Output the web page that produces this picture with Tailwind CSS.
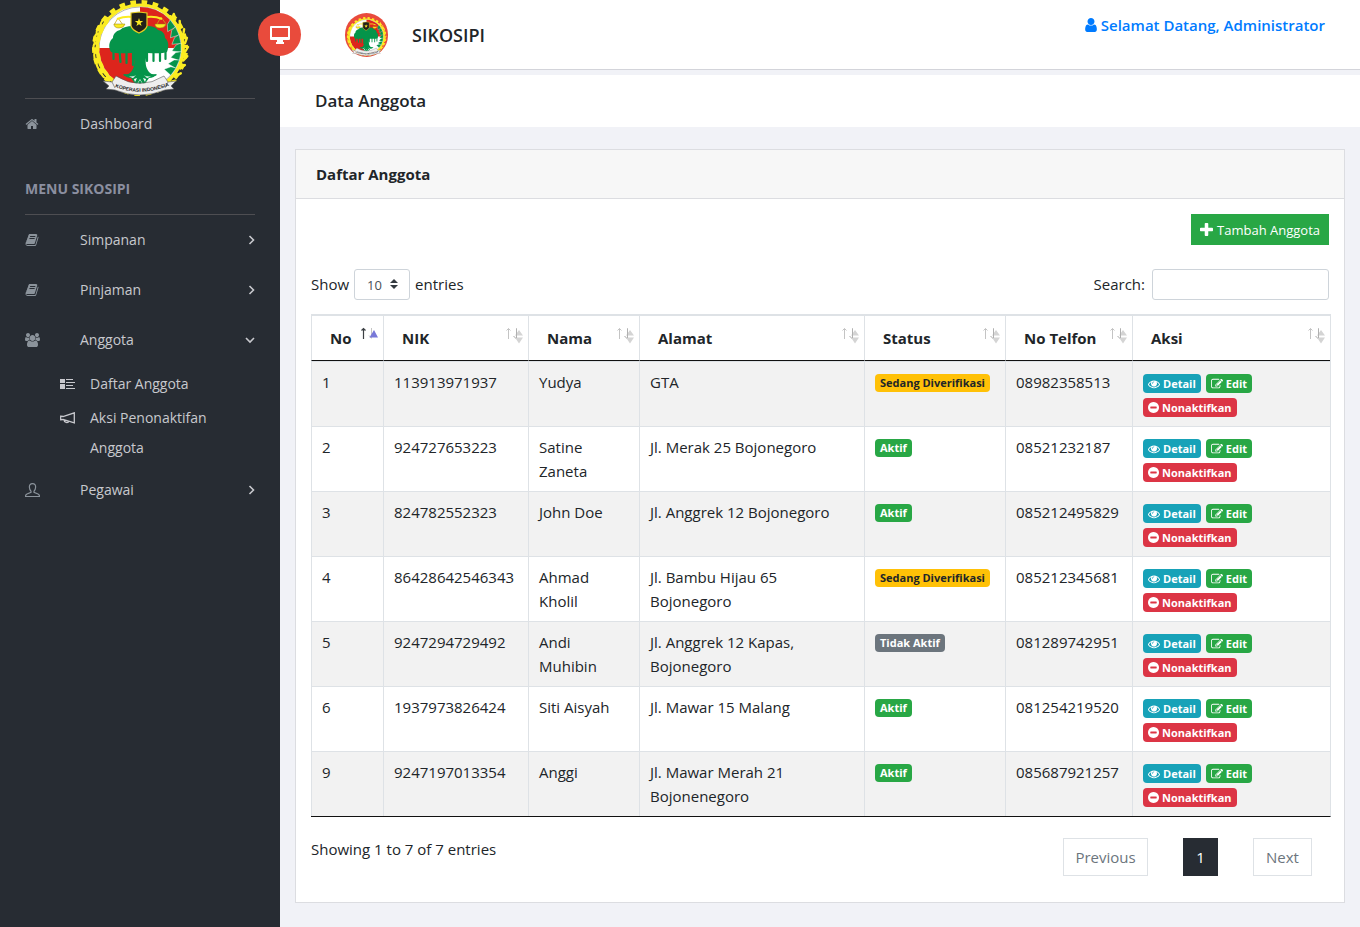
<!DOCTYPE html>
<html lang="id">
<head>
<meta charset="utf-8">
<meta name="viewport" content="width=device-width, initial-scale=1">
<title>SIKOSIPI - Data Anggota</title>
<script src="https://cdn.jsdelivr.net/npm/@tailwindcss/browser@4"></script>
</head>
<body class="flex min-h-screen bg-[#f1f2f7] font-['Open_Sans',sans-serif] text-[15px] leading-6 text-[#212529]">

<!-- Shared symbols -->
<svg class="hidden" aria-hidden="true">
  <symbol id="i-eye" viewBox="0 0 1792 1792"><path d="M1664 960q-152-236-381-353 61 104 61 225 0 185-131.5 316.5t-316.5 131.5-316.5-131.5-131.5-316.5q0-121 61-225-229 117-381 353 133 205 333.5 326.5t434.5 121.5 434.5-121.5 333.5-326.5zm-720-384q0-20-14-34t-34-14q-125 0-214.5 89.5t-89.5 214.5q0 20 14 34t34 14 34-14 14-34q0-86 61-147t147-61q20 0 34-14t14-34zm848 384q0 34-20 69-140 230-376.5 368.5t-499.5 138.5-499.5-139-376.5-368q-20-35-20-69t20-69q140-229 376.5-368t499.5-139 499.5 139 376.5 368q20 35 20 69z"/></symbol>
  <symbol id="i-edit" viewBox="0 0 1792 1792"><path d="M888 1184l116-116-152-152-116 116v56h96v96h56zm440-720q-16-16-33 1l-350 350q-17 17-1 33t33-1l350-350q17-17 1-33zm80 594v190q0 119-84.5 203.5t-203.5 84.5h-832q-119 0-203.5-84.5t-84.5-203.5v-832q0-119 84.5-203.5t203.5-84.5h832q63 0 117 25 15 7 18 23 3 17-9 29l-49 49q-14 14-32 8-23-6-45-6h-832q-66 0-113 47t-47 113v832q0 66 47 113t113 47h832q66 0 113-47t47-113v-126q0-13 9-22l64-64q15-15 35-7t20 29zm-96-738l288 288-672 672h-288v-288zm444 132l-92 92-288-288 92-92q28-28 68-28t68 28l152 152q28 28 28 68t-28 68z"/></symbol>
  <symbol id="i-minus" viewBox="128 128 1536 1536"><path d="M1344 960v-128q0-26-19-45t-45-19h-768q-26 0-45 19t-19 45v128q0 26 19 45t45 19h768q26 0 45-19t19-45zm320-64q0 209-103 385.5t-279.5 279.5-385.5 103-385.5-103-279.5-279.5-103-385.5 103-385.5 279.5-279.5 385.5-103 385.5 103 279.5 279.5 103 385.5z"/></symbol>
  <symbol id="i-book" viewBox="0 0 1792 1792"><path d="M1703 478q40 57 18 129l-275 906q-19 64-76.5 107.5t-122.5 43.5h-923q-77 0-148.5-53.5t-99.5-131.5q-24-67-2-127 0-4 3-27t4-37q1-8-3-21.5t-3-19.5q2-11 8-21t16.5-23.5 16.5-23.5q23-38 45-91.5t30-91.5q3-10 .5-30t-.5-28q3-11 17-28t17-23q21-36 42-92t25-90q1-9-2.5-32t.5-28q4-13 22-30.5t22-22.5q19-26 42.5-84.5t27.5-96.5q1-8-3-25.5t-2-26.5q2-8 9-18t18-23 17-21q8-12 16.5-30.5t15-35 16-36 19.5-32 26.5-23.5 36-11.5 47.5 5.5l-1 3q38-9 51-9h761q74 0 114 56t18 130l-274 906q-36 119-71.5 153.5t-128.5 34.5h-869q-27 0-38 15-11 16-1 43 24 70 144 70h923q29 0 56-15.5t35-41.5l300-987q7-22 5-57 38 15 59 43zm-1064 2q-4 13 2 22.5t20 9.5h608q13 0 25.5-9.5t16.5-22.5l21-64q4-13-2-22.5t-20-9.5h-608q-13 0-25.5 9.5t-16.5 22.5zm-83 256q-4 13 2 22.5t20 9.5h608q13 0 25.5-9.5t16.5-22.5l21-64q4-13-2-22.5t-20-9.5h-608q-13 0-25.5 9.5t-16.5 22.5z"/></symbol>
  <symbol id="i-right" viewBox="0 0 8 10"><path d="M2.500 1l4 4-4 4" fill="none" stroke="currentColor" stroke-width="1.6"/></symbol>
  <symbol id="i-sort" viewBox="0 0 18 20">
    <path d="M3.5 13V2.500M1.500 4.500l2-2 2 2M11.500 2v11" fill="none" stroke="#c4c4c4" stroke-width="1"/>
    <path d="M8.500 10l3 3 1-1" fill="none" stroke="#a9a9a9"/>
    <path d="M10 9.500l4-5.500 4 5.500zM10 11.500h8l-4 6z" fill="#d4d4d4"/>
    <path d="M11.500 3v9" stroke="#b0b0b0"/>
  </symbol>
  <symbol id="i-sort-asc" viewBox="0 0 18 20">
    <path d="M3.500 13V2.500M1.500 4.500l2-2 2 2" fill="none" stroke="#3c4044" stroke-width="1.200"/>
    <path d="M11.500 2v10M9 9.500l2.500 3" fill="none" stroke="#c4c4c4"/>
    <path d="M9.500 11.500l4.500-7.500 4 7.500z" fill="#7878d8"/>
  </symbol>
  <symbol id="logo" viewBox="0 0 100 98">
    <!-- gear -->
    <circle cx="50" cy="48" r="44.500" fill="none" stroke="#fbec22" stroke-width="7" pathLength="360" stroke-dasharray="7 7" stroke-dashoffset="134" clip-path="url(#gearclip)"/>
    <circle cx="50" cy="48" r="43" fill="#fff" stroke="#fbec22" stroke-width="3" clip-path="url(#gearclip)"/>
    <!-- quartered field -->
    <circle cx="50" cy="48" r="41" fill="#fff" stroke="#6b6b6b" stroke-width=".5"/>
    <path d="M50 48V7a41 41 0 0 1 41 41zM50 48H9a41 41 0 0 0 41 41z" fill="#dd251c"/>
    <!-- banyan tree -->
    <path d="M21 52c-3-5-2-11 2-14 0-4 3-7 7-8 3-3 8-4 12-4h16c4 0 8 1 10 4 5 1 7 4 7 8 4 3 4 9 2 14-5 2-13 1-20 1-2 8-2 14 2 19 3 3 6 3 8 3-4 2-8 2-17 1-9 1-13 1-17-1 2 0 5 0 8-3 4-5 4-11 2-19-7 0-17 1-22-1z" fill="#05944a"/>
    <path d="M23.500 50v9M29.500 50l1 12M36.500 50v13M43 50v15M57 50v11M63.500 50v11M70 50v11M75.500 50v9" stroke="#05944a" stroke-width="2.200" stroke-linecap="round"/>
    <path d="M33 74q9 1 17-1 8 2 17 1-3 4-8 4l-5 7h-8l-5-7q-5 0-8-4z" fill="#05944a"/>
    <path d="M35 75q7 3 11 0l-3 3zM65 75q-7 3-11 0l3 3zM45 82l-1-3 3-1zM55 82l1-3-3-1zM47 84l3-5 3 5-3 1z" fill="#fff"/>
    <path d="M50 80l2 3-2 1-2-1z" fill="#05944a"/>
    <!-- scales and shield -->
    <path d="M28 18l-4 7M28 18l5 7M71 17l-4 7M71 17l5 7" stroke="#c9a91a" fill="none" stroke-width=".8"/>
    <path d="M27 19q8-3 15-2M57 17q8-1 15 2" stroke="#fbec22" stroke-width="2" fill="none"/>
    <path d="M24 24h11q-1 4-6 4t-5-4zM65 24h11q-1 4-6 4t-5-4z" fill="#fbec22" stroke="#8f7c10" stroke-width=".5"/>
    <path d="M41 13l8-1 8 1v13q-1 4-8 7-7-3-8-7z" fill="#22201a" stroke="#e6cd20" stroke-width="1.200"/>
    <path d="M49 18l1 3h3.200l-2.600 2 1 3-2.600-1.800-2.600 1.800 1-3-2.600-2h3.200z" fill="#fbec22"/>
    <!-- chain -->
    <g fill="none" stroke="#fbec22" stroke-width="2.200">
      <ellipse id="link" cx="6" cy="48" rx="2.500" ry="5"/>
      <use href="#link" transform="rotate(12 50 48)"/><use href="#link" transform="rotate(24 50 48)"/><use href="#link" transform="rotate(36 50 48)"/><use href="#link" transform="rotate(-12 50 48)"/><use href="#link" transform="rotate(-24 50 48)"/><use href="#link" transform="rotate(-36 50 48)"/><use href="#link" transform="rotate(-48 50 48)"/>
    </g>
    <!-- cotton leaves -->
    <g fill="#05944a" stroke="#fff" stroke-width=".4">
      <path id="cot" d="M91 52l-9-1 4-6 5-2z"/>
      <use href="#cot" transform="rotate(-36 50 48)"/><use href="#cot" transform="rotate(-24 50 48)"/><use href="#cot" transform="rotate(-12 50 48)"/><use href="#cot" transform="rotate(12 50 48)"/><use href="#cot" transform="rotate(24 50 48)"/><use href="#cot" transform="rotate(36 50 48)"/>
    </g>
    <!-- rice stalk -->
    <path d="M80 15a45 45 0 0 1-4 69" fill="none" stroke="#fbec22" stroke-width="1"/>
    <g fill="none" stroke="#fbec22" stroke-width="2.400" stroke-linecap="round">
      <path id="leaf" d="M93.500 51l-1-5M95 52l3-5"/>
      <use href="#leaf" transform="rotate(-44 50 48)"/><use href="#leaf" transform="rotate(-33 50 48)"/><use href="#leaf" transform="rotate(-22 50 48)"/><use href="#leaf" transform="rotate(-11 50 48)"/><use href="#leaf" transform="rotate(11 50 48)"/><use href="#leaf" transform="rotate(22 50 48)"/><use href="#leaf" transform="rotate(33 50 48)"/><use href="#leaf" transform="rotate(44 50 48)"/>
    </g>
    <!-- ribbon -->
    <path d="M13 81l9 1 4-6q24 15 48 0l4 6 8-1-5 5 3 3-9 1q-25 10-50 0l-9-1 3-3z" fill="#eee" stroke="#555" stroke-width=".6"/>
    <path d="M22 82l3 6M78 82l-3 6" stroke="#777" stroke-width=".8"/>
    <path id="ribbonline" d="M25 87q25 10 53-1" fill="none"/>
    <text font-family="Liberation Sans" font-size="5" font-weight="700" fill="#222"><textPath href="#ribbonline">KOPERASI INDONESIA</textPath></text>
  </symbol>
  <clipPath id="gearclip"><path d="M16 0h66v17L50 48 16 20z"/></clipPath>
</svg>

<aside class="w-[280px] shrink-0 bg-[#272c33] px-[25px] font-['Open_Sans',sans-serif] text-[14px] leading-[30px] text-[#c8c9ce]">
  <div class="flex h-[99px] justify-center border-b border-[#4e4e52]">
    <a href="#" aria-label="Koperasi Indonesia"><svg class="h-[98px] w-[100px]"><use href="#logo"/></svg></a>
  </div>
  <nav>
    <a href="#" class="flex h-[50px] items-center"><span class="w-[55px] text-[#8b939b]"><svg class="size-[14px] fill-current" viewBox="0 0 1792 1792"><path d="M1472 992v480q0 26-19 45t-45 19h-384v-384h-256v384h-384q-26 0-45-19t-19-45v-480q0-1 .5-3t.5-3l575-474 575 474q1 2 1 6zm223-69l-62 74q-8 9-21 11h-3q-13 0-21-7l-692-577-692 577q-12 8-24 7-13-2-21-11l-62-74q-8-10-7-23.500t11-21.500l719-599q32-26 76-26t76 26l244 204v-195q0-14 9-23t23-9h192q14 0 23 9t9 23v408l219 182q10 8 11 21.500t-7 23.500z"/></svg></span>Dashboard</a>
    <h3 class="mt-[15px] flex h-[51px] items-center border-b border-[#4e4e52] text-[14px] font-bold text-[#8b8fa0]">MENU SIKOSIPI</h3>
    <a href="#" class="flex h-[50px] items-center"><span class="w-[55px] text-[#8b939b]"><svg class="size-[14px] fill-current"><use href="#i-book"/></svg></span><span class="flex-1">Simpanan</span><svg class="h-[10px] w-2"><use href="#i-right"/></svg></a>
    <a href="#" class="flex h-[50px] items-center"><span class="w-[55px] text-[#8b939b]"><svg class="size-[14px] fill-current"><use href="#i-book"/></svg></span><span class="flex-1">Pinjaman</span><svg class="h-[10px] w-2"><use href="#i-right"/></svg></a>
    <a href="#" class="flex h-[50px] items-center"><span class="w-[55px] text-[#8b939b]"><svg class="h-[14px] w-[15px] fill-current" viewBox="0 0 1920 1792"><path d="M593 896q-162 5-265 128h-134q-82 0-138-40.500t-56-118.500q0-353 124-353 6 0 43.500 21t97.500 42.500 119 21.500q67 0 133-23-5 37-5 66 0 139 81 256zm1071 637q0 120-73 189.500t-194 69.500h-874q-121 0-194-69.500t-73-189.500q0-53 3.500-103.500t14-109 26.500-108.500 43-97.500 62-81 85.500-53.500 111.500-20q10 0 43 21.500t73 48 107 48 135 21.500 135-21.500 107-48 73-48 43-21.500q61 0 111.500 20t85.500 53.500 62 81 43 97.500 26.500 108.500 14 109 3.500 103.500zm-1024-1277q0 106-75 181t-181 75-181-75-75-181 75-181 181-75 181 75 75 181zm704 384q0 159-112.500 271.500t-271.500 112.500-271.500-112.500-112.500-271.500 112.500-271.500 271.500-112.500 271.500 112.500 112.500 271.500zm576 225q0 78-56 118.500t-138 40.500h-134q-103-123-265-128 81-117 81-256 0-29-5-66 66 23 133 23 59 0 119-21.500t97.500-42.500 43.500-21q124 0 124 353zm-128-609q0 106-75 181t-181 75-181-75-75-181 75-181 181-75 181 75 75 181z"/></svg></span><span class="flex-1">Anggota</span><svg class="h-2 w-[10px]" viewBox="0 0 10 8"><path d="M1 2l4 4 4-4" fill="none" stroke="currentColor" stroke-width="1.600"/></svg></a>
    <div class="flex flex-col gap-1 pb-[2px] pl-[35px] pt-[4px]">
      <a href="#" class="flex"><span class="flex h-[30px] w-[30px] items-center"><svg class="h-3 w-[15px]" viewBox="0 0 15 12"><path d="M0 1h5v4H0zM0 6h5v5H0z" fill="currentColor"/><path d="M6 1.500h7M6 4.500h9M6 7.500h7M6 10.500h9" stroke="currentColor"/></svg></span>Daftar Anggota</a>
      <a href="#" class="flex"><span class="flex h-[30px] w-[30px] items-center"><svg class="h-3 w-[15px]" viewBox="0 0 15 12" fill="none" stroke="currentColor" stroke-width="1.300"><path d="M.7 4.200L3 4.500 14.300.8v10L3 7.500l-2.300.3zM4 7.800c0 3 4 3.500 5 1.400"/></svg></span><span class="flex-1">Aksi Penonaktifan Anggota</span></a>
    </div>
    <a href="#" class="flex h-[50px] items-center"><span class="w-[55px] text-[#8b939b]"><svg class="h-[14px] w-[15px]" viewBox="0 0 15 14" fill="none" stroke="currentColor" stroke-width="1.200"><path d="M7.500.6c2.200 0 3.300 1.500 3.100 3.700-.1 1.900-1 3.400-1.600 3.900v1.200l4 1.600c1 .4 1.500 1.400 1.500 2.500H.5c0-1.100.5-2.100 1.500-2.500l4-1.600V8.200c-.6-.5-1.500-2-1.600-3.900C4.200 2.100 5.300.6 7.500.6z"/></svg></span><span class="flex-1">Pegawai</span><svg class="h-[10px] w-2"><use href="#i-right"/></svg></a>
  </nav>
</aside>

<div class="min-w-0 flex-1">
  <header class="relative flex h-[70px] items-start border-b border-[#d3d4da] bg-white pl-[65px] pr-[35px]">
    <button type="button" aria-label="Menu" class="absolute left-[-22px] top-[13px] flex size-[43px] items-center justify-center rounded-full bg-[#e94b3c] text-white"><svg class="h-[18px] w-5" viewBox="0 0 20 18"><path fill="currentColor" fill-rule="evenodd" d="M1 0h18q1 0 1 1v12q0 1-1 1h-6v2h1v2H6v-2h1v-2H1q-1 0-1-1V1q0-1 1-1zM2 2v9h16V2z"/></svg></button>
    <a href="#" class="mt-[13px] flex items-center gap-6 text-[18px] font-semibold"><span class="flex h-11 w-[43px] items-end justify-center rounded-full bg-[#e94b3c]"><svg class="h-10 w-[41px]"><use href="#logo"/></svg></span>SIKOSIPI</a>
    <a href="#" class="ml-auto mt-[13px] flex items-center gap-[3px] font-semibold text-[#007bff]"><svg class="size-[14px] fill-current" viewBox="128 128 1536 1536"><path d="M1536 1399q0 109-62.500 187t-150.500 78h-854q-88 0-150.500-78t-62.500-187q0-85 8.500-160.500t31.500-152 58.500-131 94-89 134.500-34.500q131 128 313 128t313-128q76 0 134.500 34.500t94 89 58.500 131 31.500 152 8.500 160.500zm-256-887q0 159-112.500 271.500t-271.500 112.500-271.500-112.500-112.500-271.500 112.500-271.500 271.500-112.500 271.500 112.500 112.500 271.500z"/></svg>Selamat Datang, Administrator</a>
  </header>
  <h1 class="mt-[5px] flex h-[52px] items-center bg-white px-[35px] text-[17px] font-semibold">Data Anggota</h1>

  <main class="px-[15px] py-[22px]">
    <section class="border border-[#dcdde1] bg-white">
      <h2 class="flex h-[49px] items-center border-b border-[#dcdde1] bg-[#f7f7f7] px-5 font-bold">Daftar Anggota</h2>
      <div class="pb-[26px] pl-[15px] pr-[13px] pt-[15px]">
        <div class="flex justify-end pr-[2px]">
          <a href="#" class="flex h-[31px] items-center gap-1 bg-[#28a745] px-[9px] text-[13px] text-white"><svg class="size-[13px] fill-current" viewBox="192 128 1408 1408"><path d="M1600 736v192q0 40-28 68t-68 28h-416v416q0 40-28 68t-68 28h-192q-40 0-68-28t-28-68v-416h-416q-40 0-68-28t-28-68v-192q0-40 28-68t68-28h416v-416q0-40 28-68t68-28h192q40 0 68 28t28 68v416h416q40 0 68 28t28 68z"/></svg>Tambah Anggota</a>
        </div>
        <div class="mt-6 flex justify-between pr-[2px] leading-[30px]">
          <label class="flex items-start gap-[5px]">Show
            <span class="relative"><select class="block h-[31px] w-14 appearance-none rounded-[3px] border border-[#ced4da] bg-white pl-3 text-[13px] text-[#495057]"><option>10</option><option>25</option><option>50</option><option>100</option></select><svg class="pointer-events-none absolute right-3 top-[10px] h-[10px] w-2" viewBox="0 0 8 10"><path d="M0 4l4-4 4 4zM0 6h8l-4 4z" fill="#343a40"/></svg></span>
            entries</label>
          <label class="flex items-start gap-[7px]">Search: <input type="search" class="h-[31px] w-[177px] rounded-[3px] border border-[#ced4da] px-2 text-[13px]"></label>
        </div>
        <table class="mt-[14px] w-full table-fixed border-separate border-spacing-0 border-b border-r border-t border-b-[#111] border-r-[#dee2e6] border-t-[#dee2e6]">
          <colgroup><col class="w-[72px]"><col class="w-[145px]"><col class="w-[111px]"><col class="w-[225px]"><col class="w-[141px]"><col class="w-[127px]"><col></colgroup>
          <thead><tr id="heads" class="h-[46px]"></tr></thead>
          <tbody id="rows"></tbody>
        </table>
        <div class="flex items-start justify-between pr-[19px] pt-5">
          <p>Showing 1 to 7 of 7 entries</p>
          <nav class="mt-[1px] flex gap-[35px] text-[#6c757d]" aria-label="Halaman">
            <button type="button" class="h-[38px] w-[85px] border border-[#dee2e6]">Previous</button>
            <button type="button" class="h-[38px] w-[35px] bg-[#272c33] text-white">1</button>
            <button type="button" class="h-[38px] w-[59px] border border-[#dee2e6]">Next</button>
          </nav>
        </div>
      </div>
    </section>
  </main>
</div>

<script>
const members = [
  ['1', '113913971937', 'Yudya', 'GTA', 'Sedang Diverifikasi', '08982358513'],
  ['2', '924727653223', 'Satine Zaneta', 'Jl. Merak 25 Bojonegoro', 'Aktif', '08521232187'],
  ['3', '824782552323', 'John Doe', 'Jl. Anggrek 12 Bojonegoro', 'Aktif', '085212495829'],
  ['4', '86428642546343', 'Ahmad Kholil', 'Jl. Bambu Hijau 65 Bojonegoro', 'Sedang Diverifikasi', '085212345681'],
  ['5', '9247294729492', 'Andi Muhibin', 'Jl. Anggrek 12 Kapas, Bojonegoro', 'Tidak Aktif', '081289742951'],
  ['6', '1937973826424', 'Siti Aisyah', 'Jl. Mawar 15 Malang', 'Aktif', '081254219520'],
  ['9', '9247197013354', 'Anggi', 'Jl. Mawar Merah 21 Bojonenegoro', 'Aktif', '085687921257']
];
const tone = {
  'Aktif': 'bg-[#28a745] text-white',
  'Tidak Aktif': 'bg-[#6c757d] text-white',
  'Sedang Diverifikasi': 'bg-[#ffc107] text-[#212529]'
};
document.getElementById('heads').innerHTML = ['No', 'NIK', 'Nama', 'Alamat', 'Status', 'No Telfon', 'Aksi'].map((h, i) =>
  `<th scope="col" class="relative whitespace-nowrap border-b border-l border-t border-b-[#111] border-l-[#dee2e6] border-t-[#dee2e6] pl-[18px] text-left font-bold">${h}<svg class="absolute right-[5px] top-[10px] h-5 w-[18px]"><use href="${i ? '#i-sort' : '#i-sort-asc'}"/></svg></th>`).join('');
document.getElementById('rows').innerHTML = members.map(m => {
  const cell = t => `<td class="border-l border-t border-[#dee2e6] py-2 pl-[10px] pr-2 align-top">${t}</td>`;
  const status = `<span class="mt-1 flex h-[18px] w-fit items-center whitespace-nowrap rounded-[4px] px-[5px] text-[11px] font-bold ${tone[m[4]]}">${m[4]}</span>`;
  const actions = `<div class="mt-1 flex flex-wrap gap-[5px] text-[11px] font-bold text-white">
    <a href="#" class="flex h-[19px] items-center gap-[3px] rounded-[4px] bg-[#17a2b8] px-[5px]"><svg class="size-3 fill-current"><use href="#i-eye"/></svg>Detail</a>
    <a href="#" class="flex h-[19px] items-center gap-[3px] rounded-[4px] bg-[#28a745] px-[5px]"><svg class="size-3 fill-current"><use href="#i-edit"/></svg>Edit</a>
    <a href="#" class="flex h-[19px] items-center gap-[3px] rounded-[4px] bg-[#dc3545] px-[5px]"><svg class="size-[11px] fill-current"><use href="#i-minus"/></svg>Nonaktifkan</a></div>`;
  return `<tr class="h-[65px] odd:bg-[#f2f2f2]">${[m[0], m[1], m[2], m[3], status, m[5], actions].map(cell).join('')}</tr>`;
}).join('');
</script>
</body>
</html>
